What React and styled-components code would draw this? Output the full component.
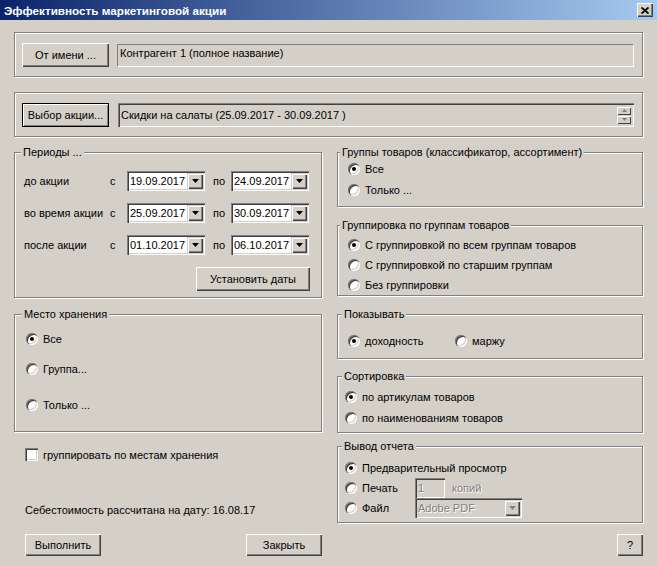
import React from 'react'
import styled, { createGlobalStyle } from 'styled-components'

const GlobalStyle = createGlobalStyle`
  * { box-sizing: border-box; }
  body {
    margin: 0;
    background: #d4d0c8;
    font-family: "Liberation Sans", Arial, sans-serif;
    font-size: 11px;
    color: #000;
  }
`

const Window = styled.div`
  width: 657px;
  height: 566px;
  background: #d4d0c8;
  display: flex;
  flex-direction: column;
  overflow: hidden;
`

const TitleBar = styled.div`
  height: 20px;
  flex: none;
  display: flex;
  align-items: center;
  justify-content: space-between;
  padding: 0 4px 0 4px;
  background: linear-gradient(to right, #0a246a, #a6caf0);
  color: #fff;
  font-weight: bold;
  font-size: 11.7px;
`

const CloseBtn = styled.div`
  width: 16px;
  height: 14px;
  display: flex;
  align-items: center;
  justify-content: center;
  background: #d4d0c8;
  box-shadow: inset 1px 1px 0 #fff, inset -1px -1px 0 #404040, inset -2px -2px 0 #808080;
`

const Body = styled.div`
  flex: 1;
  display: flex;
  flex-direction: column;
  padding: 12px 14px 0 14px;
`

const GroupBox = styled.div`
  position: relative;
  height: ${p => p.$h}px;
  margin-top: ${p => p.$mt || 0}px;
  padding: ${p => p.$pad || '0'};
  border: 1px solid #808080;
  box-shadow: inset 1px 1px 0 #fff, 1px 1px 0 #fff;
`

const Caption = styled.span`
  position: absolute;
  top: -7px;
  left: ${p => p.$cx}px;
  padding: 0 2px;
  line-height: 13px;
  background: #d4d0c8;
  white-space: nowrap;
`

const Row = styled.div`
  display: flex;
  align-items: flex-start;
  gap: ${p => p.$gap || 0}px;
`

const Button = styled.div`
  width: ${p => p.$w}px;
  height: ${p => p.$h || 22}px;
  flex: none;
  display: flex;
  align-items: center;
  justify-content: center;
  background: #d4d0c8;
  white-space: nowrap;
  border: ${p => (p.$default ? '1px solid #000' : 'none')};
  box-shadow: ${p =>
    p.$default
      ? 'inset 1px 1px 0 #fff, inset -1px -1px 0 #808080'
      : 'inset 1px 1px 0 #fff, inset -1px -1px 0 #404040, inset -2px -2px 0 #808080'};
`

const StaticField = styled.div`
  width: ${p => p.$w}px;
  height: 23px;
  margin-top: 1px;
  padding: 2px 0 0 2px;
  border: 1px solid;
  border-color: #808080 #fff #fff #808080;
`

const SunkenField = styled.div`
  width: ${p => p.$w}px;
  height: ${p => p.$h || 20}px;
  display: flex;
  align-items: center;
  padding: 2px;
  background: ${p => (p.$gray ? '#d4d0c8' : '#fff')};
  box-shadow: inset 1px 1px 0 #808080, inset 2px 2px 0 #404040, inset -1px -1px 0 #fff,
    inset -2px -2px 0 #d4d0c8;
`

const FieldText = styled.span`
  flex: 1;
  padding-left: 1px;
  white-space: nowrap;
  overflow: hidden;
  color: ${p => (p.$disabled ? '#808080' : '#000')};
  text-shadow: ${p => (p.$disabled ? '1px 1px 0 #fff' : 'none')};
`

const DropBtn = styled.div`
  width: 16px;
  height: 16px;
  flex: none;
  display: flex;
  align-items: center;
  justify-content: center;
  background: #d4d0c8;
  box-shadow: inset 1px 1px 0 #d4d0c8, inset 2px 2px 0 #fff, inset -1px -1px 0 #404040,
    inset -2px -2px 0 #808080;
`

const Spinner = styled.div`
  display: flex;
  flex-direction: column;
  gap: 1px;
  margin-right: 1px;
`

const SpinHalf = styled.div`
  width: 14px;
  height: 8px;
  display: flex;
  align-items: center;
  justify-content: center;
  background: #d4d0c8;
  box-shadow: inset 1px 1px 0 #fff, inset -1px -1px 0 #404040;
`

const Columns = styled.div`
  display: grid;
  grid-template-columns: 308px 306px;
  column-gap: 15px;
  margin-top: 15px;
`

const Column = styled.div`
  display: flex;
  flex-direction: column;
`

const PeriodGrid = styled.div`
  display: grid;
  grid-template-columns: 86px 17px 78px 26px 78px;
  row-gap: 12px;
  align-items: center;
  padding: 18px 0 0 9px;
`

const GridText = styled.span`
  padding-left: ${p => p.$pl || 0}px;
  white-space: nowrap;
`

const RightAlign = styled.div`
  display: flex;
  justify-content: flex-end;
  margin-top: ${p => p.$mt || 0}px;
  padding-right: ${p => p.$pr || 0}px;
`

const RadioList = styled.div`
  display: flex;
  flex-direction: ${p => (p.$row ? 'row' : 'column')};
  gap: ${p => p.$gap || 0}px;
  padding: ${p => p.$pt}px 0 0 ${p => p.$pl}px;
`

const RadioRow = styled.div`
  display: flex;
  align-items: center;
  gap: 5px;
  height: 20px;
  width: ${p => (p.$w ? `${p.$w}px` : 'auto')};
  margin-top: ${p => p.$mt || 0}px;
  white-space: nowrap;
`

const RadioDot = styled.span`
  position: relative;
  width: 12px;
  height: 12px;
  flex: none;
  border-radius: 50%;
  background: #fff;
  box-shadow: inset 1px 1px 0 #808080, inset 2px 2px 0 #404040, inset -1px -1px 0 #fff,
    inset -2px -2px 0 #d4d0c8;

  &::after {
    content: '';
    display: ${p => (p.$on ? 'block' : 'none')};
    position: absolute;
    left: 4px;
    top: 4px;
    width: 4px;
    height: 4px;
    border-radius: 50%;
    background: #000;
  }
`

const RadioLabel = styled.span`
  width: ${p => (p.$w ? `${p.$w}px` : 'auto')};
`

const CheckRow = styled.div`
  display: flex;
  align-items: center;
  gap: 5px;
  margin-top: ${p => p.$mt}px;
  padding-left: 11px;
`

const CheckBox = styled.span`
  width: 13px;
  height: 13px;
  background: #fff;
  box-shadow: inset 1px 1px 0 #808080, inset 2px 2px 0 #404040, inset -1px -1px 0 #fff,
    inset -2px -2px 0 #d4d0c8;
`

const Note = styled.div`
  margin-top: ${p => p.$mt}px;
  padding-left: 11px;
  line-height: 13px;
`

const BottomRow = styled.div`
  display: flex;
  justify-content: space-between;
  margin-top: ${p => p.$mt}px;
  padding-left: 11px;
`

const GrayText = styled.span`
  color: #808080;
  text-shadow: 1px 1px 0 #fff;
  margin-left: 2px;
`

const Arrow = ({ color = '#000' }) => (
  <svg width="7" height="4" viewBox="0 0 7 4">
    <polygon points="0,0 7,0 3.5,4" fill={color} />
  </svg>
)

const TinyArrow = ({ up }) => (
  <svg width="5" height="3" viewBox="0 0 5 3">
    <polygon points={up ? '2.5,0 5,3 0,3' : '0,0 5,0 2.5,3'} fill="#808080" />
  </svg>
)

const Radio = ({ on, children, mt, w }) => (
  <RadioRow $mt={mt} $w={w}>
    <RadioDot $on={on} />
    <RadioLabel>{children}</RadioLabel>
  </RadioRow>
)

const DateField = ({ value }) => (
  <SunkenField $w={78}>
    <FieldText>{value}</FieldText>
    <DropBtn>
      <Arrow />
    </DropBtn>
  </SunkenField>
)

const periods = [
  ['до акции', '19.09.2017', '24.09.2017'],
  ['во время акции', '25.09.2017', '30.09.2017'],
  ['после акции', '01.10.2017', '06.10.2017'],
]

export default function App() {
  return (
    <Window>
      <GlobalStyle />
      <TitleBar>
        <span>Эффективность маркетинговой акции</span>
        <CloseBtn>
          <svg width="8" height="7" viewBox="0 0 8 7">
            <path d="M0.5 0.5 L7.5 6.5 M7.5 0.5 L0.5 6.5" stroke="#000" strokeWidth="1.8" />
          </svg>
        </CloseBtn>
      </TitleBar>

      <Body>
        <GroupBox $h={45} $pad="10px 0 0 7px">
          <Row $gap={8}>
            <Button $w={87} $h={24}>От имени ...</Button>
            <StaticField $w={517}>Контрагент 1 (полное название)</StaticField>
          </Row>
        </GroupBox>

        <GroupBox $h={45} $mt={15} $pad="10px 0 0 7px">
          <Row $gap={9}>
            <Button $w={87} $h={24} $default>Выбор акции...</Button>
            <SunkenField $w={516} $h={24} $gray>
              <FieldText>Скидки на салаты (25.09.2017 - 30.09.2017 )</FieldText>
              <Spinner>
                <SpinHalf><TinyArrow up /></SpinHalf>
                <SpinHalf><TinyArrow /></SpinHalf>
              </Spinner>
            </SunkenField>
          </Row>
        </GroupBox>

        <Columns>
          <Column>
            <GroupBox $h={146}>
              <Caption $cx={6}>Периоды ...</Caption>
              <PeriodGrid>
                {periods.map(([label, from, to]) => (
                  <React.Fragment key={label}>
                    <GridText>{label}</GridText>
                    <GridText>с</GridText>
                    <DateField value={from} />
                    <GridText $pl={8}>по</GridText>
                    <DateField value={to} />
                  </React.Fragment>
                ))}
              </PeriodGrid>
              <RightAlign $mt={12} $pr={11}>
                <Button $w={114} $h={24}>Установить даты</Button>
              </RightAlign>
            </GroupBox>

            <GroupBox $h={118} $mt={16}>
              <Caption $cx={7}>Место хранения</Caption>
              <RadioList $pt={14} $pl={11}>
                <Radio on>Все</Radio>
                <Radio mt={10}>Группа...</Radio>
                <Radio mt={16}>Только ...</Radio>
              </RadioList>
            </GroupBox>

            <CheckRow $mt={16}>
              <CheckBox />
              <span>группировать по местам хранения</span>
            </CheckRow>

            <Note $mt={43}>Себестоимость рассчитана на дату: 16.08.17</Note>

            <BottomRow $mt={17}>
              <Button $w={76}>Выполнить</Button>
              <Button $w={76}>Закрыть</Button>
            </BottomRow>
          </Column>

          <Column>
            <GroupBox $h={55}>
              <Caption $cx={2}>Группы товаров (классификатор, ассортимент)</Caption>
              <RadioList $pt={6} $pl={10} $gap={1}>
                <Radio on>Все</Radio>
                <Radio>Только ...</Radio>
              </RadioList>
            </GroupBox>

            <GroupBox $h={71} $mt={18}>
              <Caption $cx={2}>Группировка по группам товаров</Caption>
              <RadioList $pt={9} $pl={10}>
                <Radio on>С группировкой по всем группам товаров</Radio>
                <Radio>С группировкой по старшим группам</Radio>
                <Radio>Без группировки</Radio>
              </RadioList>
            </GroupBox>

            <GroupBox $h={45} $mt={18}>
              <Caption $cx={4}>Показывать</Caption>
              <RadioList $row $pt={16} $pl={10}>
                <Radio on w={107}>доходность</Radio>
                <Radio>маржу</Radio>
              </RadioList>
            </GroupBox>

            <GroupBox $h={57} $mt={17}>
              <Caption $cx={4}>Сортировка</Caption>
              <RadioList $pt={10} $pl={7} $gap={1}>
                <Radio on>по артикулам товаров</Radio>
                <Radio>по наименованиям товаров</Radio>
              </RadioList>
            </GroupBox>

            <GroupBox $h={77} $mt={13}>
              <Caption $cx={4}>Вывод отчета</Caption>
              <RadioList $pt={11} $pl={7}>
                <Radio on>Предварительный просмотр</Radio>
                <RadioRow>
                  <RadioDot />
                  <RadioLabel $w={48}>Печать</RadioLabel>
                  <SunkenField $w={30} $gray>
                    <FieldText $disabled>1</FieldText>
                  </SunkenField>
                  <GrayText>копий</GrayText>
                </RadioRow>
                <RadioRow>
                  <RadioDot />
                  <RadioLabel $w={48}>Файл</RadioLabel>
                  <SunkenField $w={107} $gray>
                    <FieldText $disabled>Adobe PDF</FieldText>
                    <DropBtn>
                      <Arrow color="#808080" />
                    </DropBtn>
                  </SunkenField>
                </RadioRow>
              </RadioList>
            </GroupBox>

            <RightAlign $mt={11}>
              <Button $w={26}>?</Button>
            </RightAlign>
          </Column>
        </Columns>
      </Body>
    </Window>
  )
}
